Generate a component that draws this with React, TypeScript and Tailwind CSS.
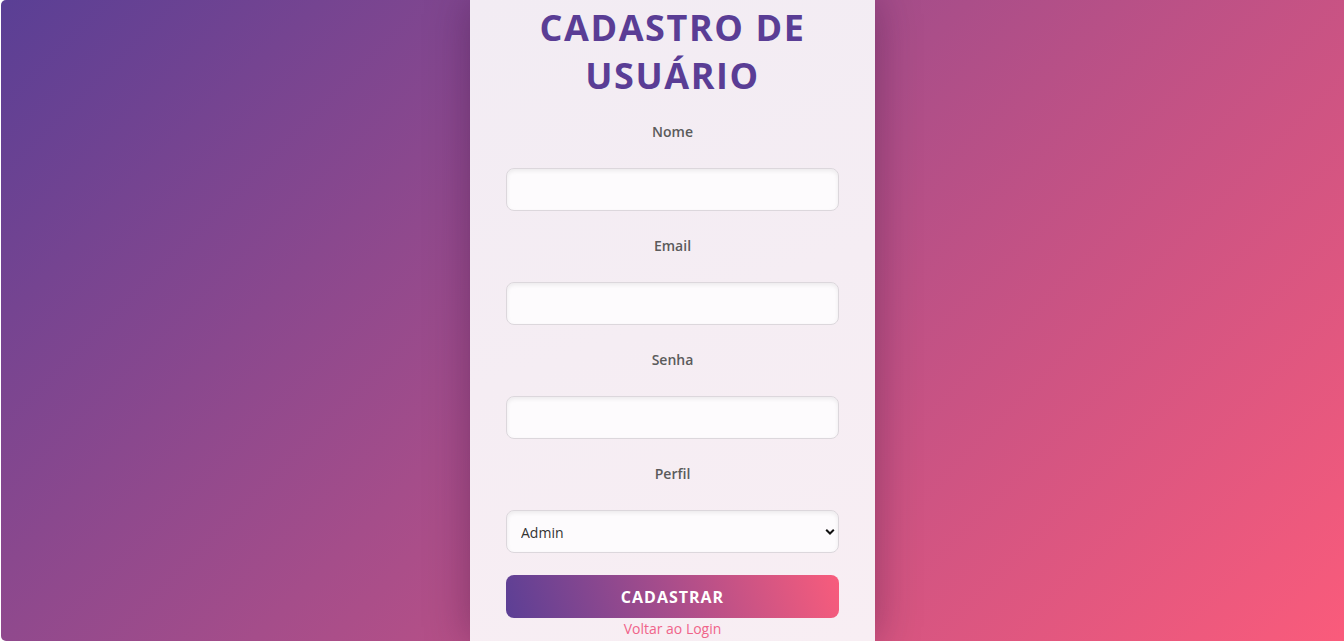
import { useState } from 'react';

const fields = [
  { name: 'nome', label: 'Nome', type: 'text' },
  { name: 'email', label: 'Email', type: 'email' },
  { name: 'senha', label: 'Senha', type: 'password' },
];

const inputClass =
  'block w-full h-[43px] rounded-lg border border-[#dcd7dc] bg-[#fdfbfd] px-[14px] text-sm text-[#333] shadow-[inset_0_2px_4px_rgba(0,0,0,0.07)] outline-none';

export default function App() {
  const [form, setForm] = useState({ nome: '', email: '', senha: '', perfil: 'admin' });

  const handleChange = (e: React.ChangeEvent<HTMLInputElement | HTMLSelectElement>) => {
    const { name, value } = e.target;
    setForm({ ...form, [name]: value });
  };

  return (
    <div className="bg-white pl-px h-[641px] overflow-hidden" style={{ fontFamily: '"Open Sans", "Noto Sans", sans-serif' }}>
      <div className="h-full rounded-l-[5px] bg-[linear-gradient(135deg,#5a3f95_0%,#a54d8a_45%,#fa5b7b_100%)] flex justify-center">
        <div className="w-[405px] h-full bg-[linear-gradient(160deg,#f2ecf3_0%,#f8eef3_100%)] shadow-[0_0_40px_rgba(40,10,50,0.35)] px-9 pt-[4px]">
          <h1 className="text-center text-[36px] leading-[48px] font-bold tracking-[1.6px] text-[#5a3d95]">
            CADASTRO DE
            <br />
            USUÁRIO
          </h1>

          <form className="mt-[21px]" onSubmit={(e) => e.preventDefault()}>
            {fields.map((f) => (
              <div key={f.name} className="mb-[24px]">
                <label className="block text-center text-sm leading-[21px] font-semibold text-[#5b5b5b] mb-[26px]">
                  {f.label}
                </label>
                <input
                  type={f.type}
                  name={f.name}
                  value={form[f.name as 'nome' | 'email' | 'senha']}
                  onChange={handleChange}
                  className={inputClass}
                />
              </div>
            ))}

            <div>
              <label className="block text-center text-sm leading-[21px] font-semibold text-[#5b5b5b] mb-[26px]">
                Perfil
              </label>
              <div className="relative">
                <select
                  name="perfil"
                  value={form.perfil}
                  onChange={handleChange}
                  className={inputClass + ' appearance-none pt-[2px]'}
                >
                  <option value="admin">Admin</option>
                  <option value="usuario">Usuário</option>
                </select>
                <svg
                  className="absolute right-[4px] top-1/2 -translate-y-1/2 pointer-events-none"
                  width="10"
                  height="7"
                  viewBox="0 0 10 7"
                  fill="none"
                >
                  <path d="M1.2 1.3 L5 5 L8.8 1.3" stroke="#111" strokeWidth="2" />
                </svg>
              </div>
            </div>

            <button
              type="submit"
              className="mt-[22px] block w-full h-[43px] rounded-lg bg-[linear-gradient(75deg,#5c3f95_0%,#a94d8b_50%,#f85c7c_100%)] text-white font-bold text-base tracking-[1px]"
            >
              CADASTRAR
            </button>
            <p className="text-center text-sm leading-[21px]">
              <a href="#" className="text-[#f0648a]">
                Voltar ao Login
              </a>
            </p>
          </form>
        </div>
      </div>
    </div>
  );
}
